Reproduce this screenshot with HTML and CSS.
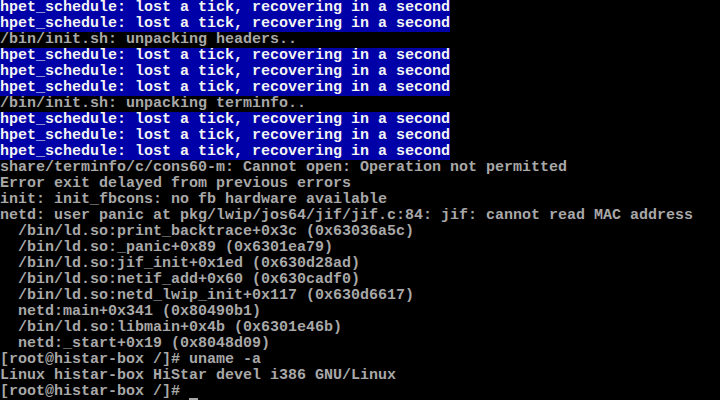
FILE: index.html
```html
<!DOCTYPE html>
<html>
<head>
<meta charset="utf-8">
<link rel="stylesheet" href="styles.css">
</head>
<body>
<div class="console">
<div class="line hl">hpet_schedule: lost a tick, recovering in a second</div>
<div class="line hl">hpet_schedule: lost a tick, recovering in a second</div>
<div class="line">/bin/init.sh: unpacking headers..</div>
<div class="line hl">hpet_schedule: lost a tick, recovering in a second</div>
<div class="line hl">hpet_schedule: lost a tick, recovering in a second</div>
<div class="line hl">hpet_schedule: lost a tick, recovering in a second</div>
<div class="line">/bin/init.sh: unpacking terminfo..</div>
<div class="line hl">hpet_schedule: lost a tick, recovering in a second</div>
<div class="line hl">hpet_schedule: lost a tick, recovering in a second</div>
<div class="line hl">hpet_schedule: lost a tick, recovering in a second</div>
<div class="line">share/terminfo/c/cons60-m: Cannot open: Operation not permitted</div>
<div class="line">Error exit delayed from previous errors</div>
<div class="line">init: init_fbcons: no fb hardware available</div>
<div class="line">netd: user panic at pkg/lwip/jos64/jif/jif.c:84: jif: cannot read MAC address</div>
<div class="line">  /bin/ld.so:print_backtrace+0x3c (0x63036a5c)</div>
<div class="line">  /bin/ld.so:_panic+0x89 (0x6301ea79)</div>
<div class="line">  /bin/ld.so:jif_init+0x1ed (0x630d28ad)</div>
<div class="line">  /bin/ld.so:netif_add+0x60 (0x630cadf0)</div>
<div class="line">  /bin/ld.so:netd_lwip_init+0x117 (0x630d6617)</div>
<div class="line">  netd:main+0x341 (0x80490b1)</div>
<div class="line">  /bin/ld.so:libmain+0x4b (0x6301e46b)</div>
<div class="line">  netd:_start+0x19 (0x8048d09)</div>
<div class="line">[root@histar-box /]# uname -a</div>
<div class="line">Linux histar-box HiStar devel i386 GNU/Linux</div>
<div class="line">[root@histar-box /]# <span class="cursor"> </span></div>
</div>
</body>
</html>
```
FILE: styles.css
```css
html, body {
  margin: 0;
  padding: 0;
  background: #000;
  width: 720px;
  height: 400px;
  overflow: hidden;
}
.console {
  font-family: "Liberation Mono", "DejaVu Sans Mono", monospace;
  font-size: 15px;
  font-weight: bold;
  line-height: 16px;
  color: #a8a8a8;
  display: flex;
  flex-direction: column;
  align-items: flex-start;
}
.line {
  white-space: pre;
  height: 16px;
}
.hl {
  background: #0000a8;
  color: #f4f4f4;
}
.cursor {
  display: inline-block;
  width: 9px;
  height: 16px;
  box-sizing: border-box;
  border-bottom: 2px solid #a8a8a8;
  vertical-align: top;
}
```
